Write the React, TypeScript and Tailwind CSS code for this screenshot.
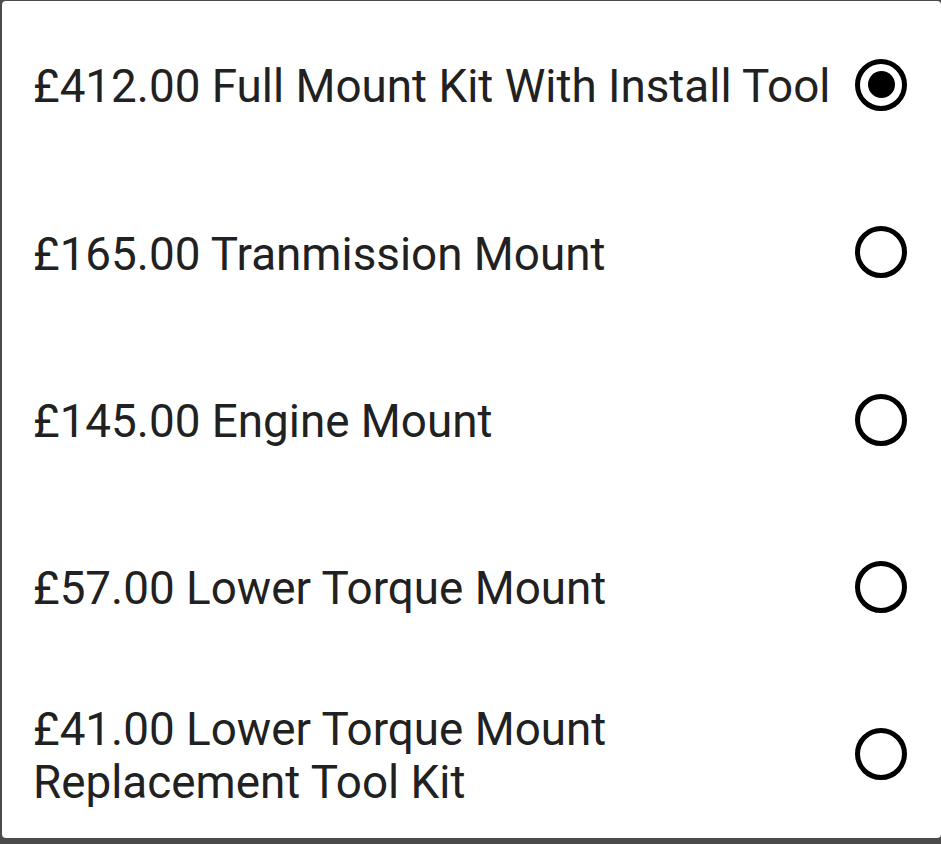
import React from 'react';

interface Option {
  label: string;
  checked?: boolean;
}

const options: Option[] = [
  { label: '£412.00 Full Mount Kit With Install Tool', checked: true },
  { label: '£165.00 Tranmission Mount' },
  { label: '£145.00 Engine Mount' },
  { label: '£57.00 Lower Torque Mount' },
  { label: '£41.00 Lower Torque Mount Replacement Tool Kit' },
];

const Radio: React.FC<{ checked?: boolean }> = ({ checked }) => (
  <div className="w-[52px] h-[52px] shrink-0 rounded-full border-[5px] border-black flex items-center justify-center">
    {checked && <div className="w-[27px] h-[27px] rounded-full bg-black" />}
  </div>
);

const App: React.FC = () => {
  return (
    <div className="w-[941px] h-[844px] bg-[#4b4b4b] pl-[2px] pt-[1px] overflow-hidden">
      <div
        className="bg-white h-[837px] rounded-[4px] flex flex-col"
        style={{ fontFamily: 'Roboto, "Noto Sans", sans-serif' }}
      >
        {options.map((o) => (
          <div key={o.label} className="flex-1 flex items-center justify-between pl-[31px] pr-[34px]">
            <span className="text-[45.8px] leading-[53px] text-[#212121] max-w-[805px] pt-[4px]">
              {o.label}
            </span>
            <Radio checked={o.checked} />
          </div>
        ))}
      </div>
    </div>
  );
};

export default App;
